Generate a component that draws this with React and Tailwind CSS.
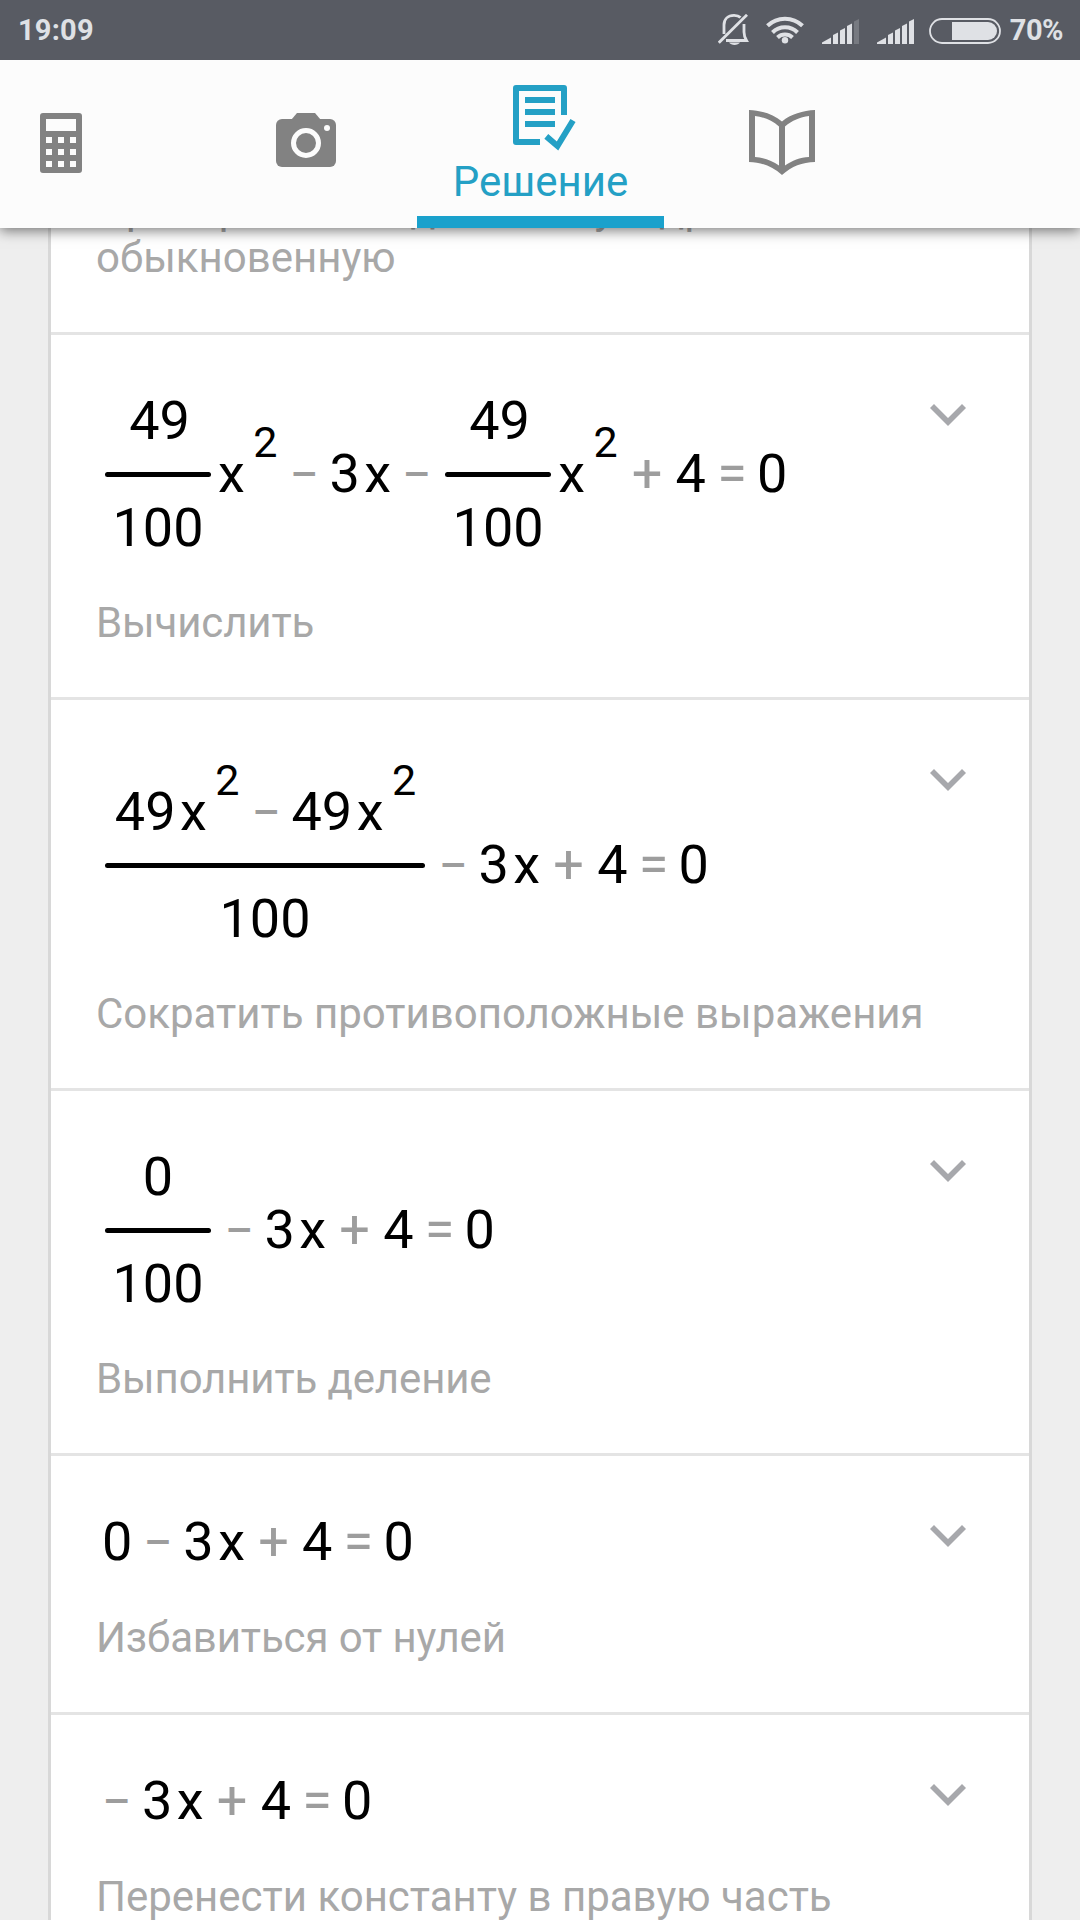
import React, { useState } from "react";

const SignalIcon = ({ weak }) => (
  <svg width="37" height="25" viewBox="0 0 37 25" fill="#dfe1e5">
    <path d="M0 25V23.5L9 18.5V25Z" />
    <path d="M11 25V16L16 13.5V25Z" />
    <path d="M18 25V11.5L23 9V25Z" />
    <path d="M25 25V7L30 4.5V25Z" />
    <path d="M32 25V2.5L37 0V25Z" fill={weak ? "#777a81" : "#dfe1e5"} />
  </svg>
);

const StatusBar = () => (
  <div className="h-[60px] bg-[#585b63] flex items-center justify-between pt-[2px] pl-[18px] pr-[18px] text-[29px] font-bold text-[#dfe1e5]">
    <span className="tracking-[0.2px]">19:09</span>
    <div className="flex items-center">
      <svg className="mb-[2px]" width="31" height="32" viewBox="0 0 31 32" fill="none" stroke="#dfe1e5" strokeWidth="2.8">
        <path d="M6 20V11C6 5 10 1.4 16 1.4C19 1.4 21 2 22.5 3.5" />
        <path d="M26 10V18C26 22 27 24 28.5 26.5H8" />
        <path d="M0.8 28.7L29 0.8" />
        <path d="M11 28.5H22C20 31.8 13 31.8 11 28.5Z" fill="#dfe1e5" stroke="none" />
      </svg>
      <svg className="ml-[17px] mb-[3px]" width="38" height="28" viewBox="0 0 38 28" fill="none" stroke="#dfe1e5" strokeWidth="4">
        <path d="M1.5 9.8A25 25 0 0 1 36.5 9.8" />
        <path d="M6.5 16.5A17.5 17.5 0 0 1 31.5 16.5" />
        <path d="M11.5 21.5A11 11 0 0 1 26.5 21.5" />
        <circle cx="19" cy="24.3" r="3.2" fill="#dfe1e5" stroke="none" />
      </svg>
      <div className="ml-[18px] flex gap-[18px]">
        <SignalIcon weak />
        <SignalIcon />
      </div>
      <svg className="ml-[15px] mb-[1px]" width="72" height="26" viewBox="0 0 72 26">
        <rect x="1" y="1" width="70" height="24" rx="12" fill="none" stroke="#dfe1e5" strokeWidth="1.8" />
        <path d="M23 4H59A9 9 0 0 1 59 22H23Z" fill="#dfe1e5" />
      </svg>
      <span className="ml-[9px] -mr-px tracking-[-0.5px]">70%</span>
    </div>
  </div>
);

const CalculatorIcon = () => (
  <svg width="42" height="60" viewBox="0 0 42 60">
    <path
      fill="#828282"
      fillRule="evenodd"
      d="M3 0H39Q42 0 42 3V57Q42 60 39 60H3Q0 60 0 57V3Q0 0 3 0ZM6 6V18H36V6ZM6 24V30H12V24ZM18 24V30H24V24ZM30 24V30H36V24ZM6 36V42H12V36ZM18 36V42H24V36ZM30 36V42H36V36ZM6 48V54H12V48ZM18 48V54H24V48ZM30 48V54H36V48Z"
    />
  </svg>
);

const CameraIcon = () => (
  <svg width="60" height="54" viewBox="0 0 60 54" fill="#828282">
    <rect y="6" width="60" height="48" rx="6" />
    <path d="M15.5 6.5L21 0H39L44.5 6.5Z" />
    <circle cx="30" cy="30" r="12.5" stroke="#fcfcfc" strokeWidth="5" />
    <circle cx="51" cy="15" r="3" fill="#fcfcfc" />
  </svg>
);

const SolutionIcon = () => (
  <svg width="63" height="66" viewBox="0 0 63 66" fill="none" stroke="#24a0c5" strokeWidth="6">
    <path d="M51 30V3H3V57H27" strokeLinejoin="round" />
    <path d="M12 15H42M12 27H42M12 39H42" />
    <path d="M33.3 51.4L44.5 61L60 35.5" />
  </svg>
);

const BookIcon = () => (
  <svg width="66" height="65" viewBox="0 0 66 65">
    <path
      fill="#828282"
      fillRule="evenodd"
      d="M0 0C12 0.5 24 4 33 11.5C42 4 54 0.5 66 0V52C53 52.5 43 56 33 65C23 56 13 52.5 0 52ZM6 6V47C15 47.5 23 50.5 30 55.5V16.5C23 10.5 15 7 6 6ZM60 6C51 7 43 10.5 36 16.5V55.5C43 50.5 51 47.5 60 47Z"
    />
  </svg>
);

const TabBar = () => (
  <nav className="h-[168px] bg-[#fcfcfc] flex -ml-[73px]">
    <button className="w-[268px] pt-[53px] flex justify-center items-start">
      <CalculatorIcon />
    </button>
    <button className="w-[222px] pt-[53px] flex justify-center items-start">
      <CameraIcon />
    </button>
    <button className="w-[247px] pt-[25px] border-b-12 border-[#1aa1cc] flex flex-col items-center">
      <div className="pl-[8px]">
        <SolutionIcon />
      </div>
      <span className="mt-[6px] text-[42px] leading-[49px] text-[#24a0c5]">
        Решение
      </span>
    </button>
    <button className="w-[236px] pt-[50px] flex justify-center items-start">
      <BookIcon />
    </button>
  </nav>
);

// Pieces of an equation
const Minus = () => (
  <span className="w-[51px] text-center text-[43px] font-medium text-[#9d9d9d]">
    –
  </span>
);

const Plus = () => (
  <span className="w-[57px] text-center text-[#9d9d9d]">+</span>
);

const Equals = () => (
  <span className="w-[51px] pl-px text-center text-[#9d9d9d]">=</span>
);

const X = ({ squared }) => (
  <span className="ml-[4.5px] flex items-start">
    x
    {squared && (
      <span className="ml-[8.5px] -mt-[25px] mr-px text-[43px] leading-[50px]">
        2
      </span>
    )}
  </span>
);

const Fraction = ({ top, wide }) => (
  <span className="ml-[3px] mr-[2.5px] -mb-px flex flex-col items-center">
    <span className="flex">{top}</span>
    <span
      className={`mt-[18.5px] mb-[19.5px] h-[5px] rounded-full bg-black ${
        wide ? "w-[320px]" : "w-[106px]"
      }`}
    />
    <span>100</span>
  </span>
);

const Tail = () => (
  <>
    <span>3</span>
    <X />
    <Plus />
    <span>4</span>
    <Equals />
    <span>0</span>
  </>
);

const steps = [
  {
    caption: "Вычислить",
    equation: (
      <>
        <Fraction top={<span className="pl-[3px]">49</span>} />
        <X squared />
        <Minus />
        <span>3</span>
        <X />
        <Minus />
        <Fraction top={<span className="pl-[3px]">49</span>} />
        <X squared />
        <Plus />
        <span>4</span>
        <Equals />
        <span>0</span>
      </>
    ),
  },
  {
    caption: "Сократить противоположные выражения",
    tall: true,
    equation: (
      <>
        <Fraction
          wide
          top={
            <span className="pl-[2px] flex">
              <span>49</span>
              <X squared />
              <Minus />
              <span>49</span>
              <X squared />
            </span>
          }
        />
        <Minus />
        <Tail />
      </>
    ),
  },
  {
    caption: "Выполнить деление",
    equation: (
      <>
        <Fraction top="0" />
        <Minus />
        <Tail />
      </>
    ),
  },
  {
    caption: "Избавиться от нулей",
    equation: (
      <>
        <span>0</span>
        <Minus />
        <Tail />
      </>
    ),
  },
  {
    caption: "Перенести константу в правую часть",
    equation: (
      <>
        <span className="-ml-[11px] flex">
          <Minus />
        </span>
        <Tail />
      </>
    ),
  },
];

const Step = ({ step, open, onToggle }) => (
  <li
    className={`border-t-3 border-[#e4e4e4] pb-[50px] flex justify-between items-start ${
      step.tall ? "pt-[80px]" : "pt-[54px]"
    }`}
  >
    <div>
      <div className="pl-[51px] flex items-center text-[54px] leading-[64px] text-black">
        {step.equation}
      </div>
      <p
        className={`mt-[39px] pl-[45px] text-[42px] leading-[49px] text-[#a8a8a8] whitespace-nowrap ${
          step.caption.length < 20 ? "tracking-[-0.13px]" : ""
        }`}
      >
        {step.caption}
      </p>
    </div>
    <button
      className={`mr-[63px] shrink-0 ${step.tall ? "-mt-[11px]" : "mt-[15px]"} ${
        open ? "rotate-180" : ""
      }`}
      onClick={onToggle}
    >
      <svg width="36" height="22" viewBox="0 0 36 22" fill="#a7a8ac">
        <path d="M0 4L4 0L18 14L32 0L36 4L18 22Z" />
      </svg>
    </button>
  </li>
);

const App = () => {
  const [openStep, setOpenStep] = useState(null);

  return (
    <div className="w-[1080px] h-[1920px] overflow-hidden bg-[#eeeeee] font-['Roboto',sans-serif]">
      <header className="relative z-10 shadow-[0_3px_12px_rgba(0,0,0,0.5)]">
        <StatusBar />
        <TabBar />
      </header>
      {/* The list is scrolled, its first row slides under the header */}
      <main className="-mt-[44px] mx-[48px] border-x-3 border-[#d8d8d8] bg-white">
        <p className="pl-[45px] pb-[50px] text-[42px] leading-[49px] text-[#a8a8a8]">
          Преобразовать десятичную дробь в
          <br />
          обыкновенную
        </p>
        <ul>
          {steps.map((step, i) => (
            <Step
              key={step.caption}
              step={step}
              open={openStep === i}
              onToggle={() => setOpenStep(openStep === i ? null : i)}
            />
          ))}
        </ul>
      </main>
    </div>
  );
};

export default App;
